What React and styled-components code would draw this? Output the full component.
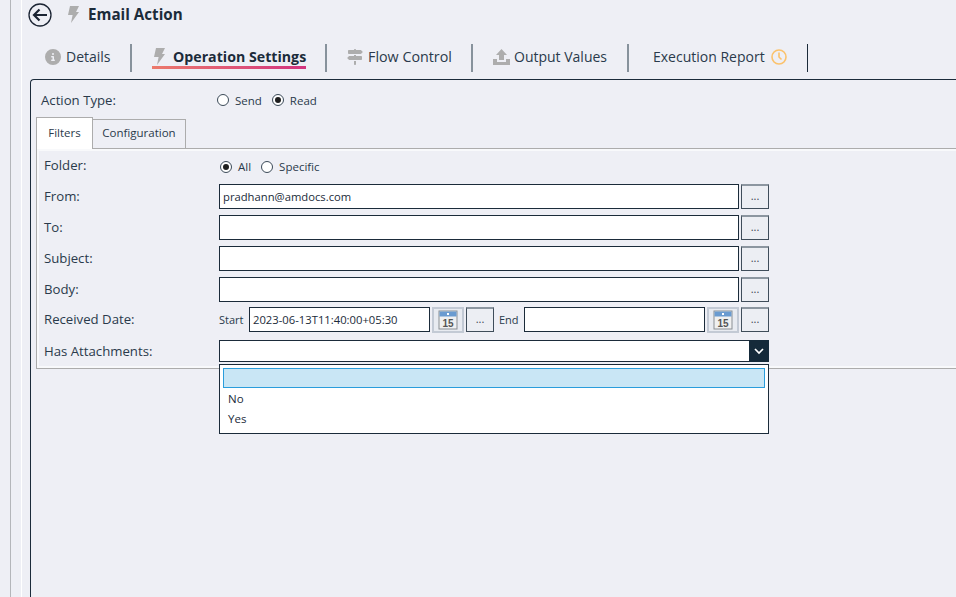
import React from 'react'
import styled, { createGlobalStyle } from 'styled-components'
import { FaCircleInfo, FaSignsPost } from 'react-icons/fa6'

const Global = createGlobalStyle`
  html, body {
    margin: 0;
    padding: 0;
    height: 597px;
    overflow: hidden;
    background: #eeeff5;
  }
  * { box-sizing: border-box; }
  body {
    font-family: "Open Sans", "Noto Sans", sans-serif;
    font-size: 12px;
    color: #1b2b3a;
  }
`

const Shell = styled.div`
  display: flex;
  height: 597px;
  width: 956px;
  overflow: hidden;
`

const Rail = styled.div`
  flex: none;
  width: 22px;
  height: 100%;
  padding-left: 10px;
  border-right: 1px solid #fff;
  &::before {
    content: '';
    display: block;
    width: 1px;
    height: 100%;
    background: #b4b6ba;
  }
`

const Main = styled.div`
  flex: 1;
  min-width: 0;
  padding-left: 6px;
  display: flex;
  flex-direction: column;
`

const Header = styled.div`
  height: 44px;
  padding-top: 3px;
  display: flex;
  align-items: flex-start;
`

const BackIcon = styled.svg`
  width: 24px;
  height: 24px;
  flex: none;
`

const BoltIcon = styled.svg`
  width: 12px;
  height: 17px;
  flex: none;
  fill: #adadad;
  margin: ${p => p.$margin || 0};
`

const Title = styled.div`
  font-size: 15.2px;
  font-weight: 700;
  line-height: 22px;
  color: #1b2b3a;
`

const TabBar = styled.div`
  height: 35px;
  display: flex;
  align-items: flex-start;
`

const NavTab = styled.div`
  height: 28px;
  width: ${p => p.$width}px;
  padding: 0 0 3px ${p => p.$pad}px;
  border-right: ${p => p.$sepWidth || 2}px solid ${p => p.$sep || '#87929c'};
  display: flex;
  align-items: center;
  gap: ${p => p.$gap || 5}px;
  font-size: ${p => p.$font || 14}px;
  color: #2a3a4b;
  flex: none;
`

const ActiveLabel = styled.span`
  position: relative;
  font-weight: 700;
  color: #1b2b3a;
  font-size: 14.2px;
`

const Underline = styled.div`
  position: absolute;
  left: -21px;
  right: 0;
  bottom: -3px;
  height: 3px;
  background: linear-gradient(90deg, #ec7a6c, #d2337f);
`

const NavIcon = styled.span`
  display: inline-flex;
  color: #adadad;
  flex: none;
`

const Panel = styled.div`
  flex: 1;
  margin: 0 -10px 0 2px;
  border: 1px solid #1b2b3a;
  border-right: none;
  border-bottom: none;
  border-top-left-radius: 4px;
  padding: 0 0 0 5px;
`

const TypeRow = styled.div`
  height: 38px;
  display: flex;
  align-items: center;
  padding: 2px 0 0 5px;
`

const FormLabel = styled.div`
  width: ${p => p.$width}px;
  flex: none;
  font-size: 13.2px;
  padding-bottom: ${p => p.$lift || 1}px;
  color: #2a3a4b;
`

const RadioItem = styled.label`
  display: inline-flex;
  align-items: center;
  gap: 6px;
  margin-right: 10px;
  font-size: 11.5px;
  color: #2a3a4b;
`

const RadioDot = styled.span`
  width: 12px;
  height: 12px;
  border-radius: 50%;
  border: 1px solid #3b4a58;
  background: #fff;
  display: inline-flex;
  align-items: center;
  justify-content: center;
  &::after {
    content: '';
    width: 6px;
    height: 6px;
    border-radius: 50%;
    background: ${p => (p.$on ? '#1f1f1f' : 'transparent')};
  }
`

const SubTabs = styled.div`
  height: 31px;
  display: flex;
  align-items: flex-end;
  position: relative;
  z-index: 1;
  margin-bottom: -1px;
`

const SubTab = styled.div`
  height: ${p => (p.$on ? 32 : 30)}px;
  width: ${p => p.$width}px;
  padding-bottom: 3px;
  display: flex;
  align-items: center;
  justify-content: center;
  background: ${p => (p.$on ? '#fff' : 'transparent')};
  border: 1px solid #acacac;
  border-left: ${p => (p.$on ? '1px solid #acacac' : 'none')};
  border-bottom: ${p => (p.$on ? 'none' : '1px solid #acacac')};
  font-size: 11.5px;
  color: #2a3a4b;
`

const SubPanel = styled.div`
  position: relative;
  height: 221px;
  border: 1px solid #acacac;
  border-right: none;
  box-shadow: inset 2px 2px 0 #f8f9fb, inset 0 -2px 0 #f8f9fb;
  padding: 3px 0 0 7px;
`

const Row = styled.div`
  display: flex;
  align-items: center;
  height: ${p => p.$height || 31}px;
`

const TextField = styled.div`
  width: ${p => p.$width || 520}px;
  height: 25px;
  flex: none;
  background: #fff;
  border: 1px solid #1b2b3a;
  padding: 0 0 1px 3px;
  display: flex;
  align-items: center;
  font-size: 11.25px;
  color: #1b2b3a;
`

const DotsButton = styled.div`
  width: 28px;
  height: 25px;
  flex: none;
  margin-left: 2px;
  border: 1px solid #3f4d5a;
  border-top: 2px solid #8c96a0;
  background: #eceef3;
  font-size: 11px;
  line-height: 19px;
  text-align: center;
  color: #3a4652;
`

const DateWord = styled.span`
  width: ${p => p.$width}px;
  flex: none;
  margin-left: ${p => p.$left || 0}px;
  font-size: 11px;
  color: #2a3a4b;
`

const CalendarButton = styled.div`
  width: 32px;
  height: 26px;
  flex: none;
  margin-left: 2px;
  background: #e8ebf1;
  border: 2px solid #c3cad5;
  display: flex;
  align-items: center;
  justify-content: center;
`

const Combo = styled.div`
  width: 550px;
  height: 22px;
  flex: none;
  display: flex;
  justify-content: flex-end;
  background: #fff;
  border: 1px solid #1b2b3a;
`

const ComboArrow = styled.div`
  width: 20px;
  margin: -1px -1px -1px 0;
  background: #152a3a;
  display: flex;
  align-items: center;
  justify-content: center;
`

const Popup = styled.div`
  position: absolute;
  left: 182px;
  top: 215px;
  width: 550px;
  height: 70px;
  background: #fff;
  border: 1px solid #1b2b3a;
  padding: 3px;
  z-index: 2;
`

const PopupItem = styled.div`
  height: 20px;
  padding-left: 5px;
  line-height: 22px;
  font-size: 11.5px;
  color: #1b2b3a;
  ${p => p.$on && `
    background: #c9e6f5;
    border: 1px solid #2a9ddc;
  `}
`

const Bolt = props => (
  <BoltIcon viewBox="0 0 12 17" {...props}>
    <path d="M3 0h9L9 6h3L4 17l1.6-8H1z" />
  </BoltIcon>
)

const Calendar = () => (
  <svg width="20" height="20" viewBox="0 0 20 20">
    <rect x="1" y="1" width="18" height="18" fill="#f0f0f0" stroke="#8a8f94" />
    <rect x="1.5" y="1.5" width="17" height="5" fill="#6a9bd0" />
    <rect x="9" y="3" width="2" height="2" fill="#fff" />
    <text x="10" y="16.5" textAnchor="middle" fontSize="10" fontWeight="700" fill="#555" fontFamily="Liberation Sans, sans-serif">15</text>
  </svg>
)

const InputRow = ({ label, value }) => (
  <Row>
    <FormLabel $width={175}>{label}</FormLabel>
    <TextField>{value}</TextField>
    <DotsButton>...</DotsButton>
  </Row>
)

export default function App() {
  return (
    <Shell>
      <Global />
      <Rail />
      <Main>
        <Header>
          <BackIcon viewBox="0 0 24 24" fill="none" stroke="#1b2433">
            <circle cx="12" cy="12" r="11" strokeWidth="1.3" />
            <path d="M19 12H6M11.5 6.5L6 12l5.5 5.5" strokeWidth="2.2" />
          </BackIcon>
          <Bolt $margin="3px 9px 0 15px" />
          <Title>Email Action</Title>
        </Header>
        <TabBar>
          <NavTab $width={104} $pad={17}>
            <NavIcon><FaCircleInfo size={16} /></NavIcon>
            Details
          </NavTab>
          <NavTab $width={195} $pad={21} $gap={8}>
            <Bolt />
            <ActiveLabel>Operation Settings<Underline /></ActiveLabel>
          </NavTab>
          <NavTab $width={146} $pad={20} $gap={5} $font={14.3}>
            <NavIcon><FaSignsPost size={16} /></NavIcon>
            Flow Control
          </NavTab>
          <NavTab $width={156} $pad={20} $gap={4}>
            <NavIcon>
              <svg width="17" height="16" viewBox="0 0 17 16" fill="#adadad">
                <path d="M8.5 0L14 6h-3v5H6V6H3zM0 10h4v3h9v-3h4v6H0z" />
              </svg>
            </NavIcon>
            Output Values
          </NavTab>
          <NavTab $width={179} $pad={24} $gap={6} $sep="#1b2b3a" $sepWidth={1}>
            Execution Report
            <svg width="16" height="16" viewBox="0 0 16 16" fill="none" stroke="#fbc26c" strokeWidth="1.6">
              <circle cx="8" cy="8" r="7" />
              <path d="M8 3.5V8l2.5 2.5" />
            </svg>
          </NavTab>
        </TabBar>
        <Panel>
          <TypeRow>
            <FormLabel $width={176}>Action Type:</FormLabel>
            <RadioItem><RadioDot />Send</RadioItem>
            <RadioItem><RadioDot $on />Read</RadioItem>
          </TypeRow>
          <SubTabs>
            <SubTab $on $width={57}>Filters</SubTab>
            <SubTab $width={93}>Configuration</SubTab>
          </SubTabs>
          <SubPanel>
            <Row $height={29}>
              <FormLabel $width={176} $lift={3}>Folder:</FormLabel>
              <RadioItem><RadioDot $on />All</RadioItem>
              <RadioItem><RadioDot />Specific</RadioItem>
            </Row>
            <InputRow label="From:" value="pradhann@amdocs.com" />
            <InputRow label="To:" />
            <InputRow label="Subject:" />
            <InputRow label="Body:" />
            <Row $height={29}>
              <FormLabel $width={175}>Received Date:</FormLabel>
              <DateWord $width={30}>Start</DateWord>
              <TextField $width={181}>2023-06-13T11:40:00+05:30</TextField>
              <CalendarButton><Calendar /></CalendarButton>
              <DotsButton>...</DotsButton>
              <DateWord $width={25} $left={5}>End</DateWord>
              <TextField $width={181} />
              <CalendarButton><Calendar /></CalendarButton>
              <DotsButton>...</DotsButton>
            </Row>
            <Row $height={34}>
              <FormLabel $width={175}>Has Attachments:</FormLabel>
              <Combo>
                <ComboArrow>
                  <svg width="10" height="7" viewBox="0 0 10 7" fill="none" stroke="#fff" strokeWidth="1.7">
                    <path d="M1 1l4 4 4-4" />
                  </svg>
                </ComboArrow>
              </Combo>
            </Row>
            <Popup>
              <PopupItem $on />
              <PopupItem>No</PopupItem>
              <PopupItem>Yes</PopupItem>
            </Popup>
          </SubPanel>
        </Panel>
      </Main>
    </Shell>
  )
}
